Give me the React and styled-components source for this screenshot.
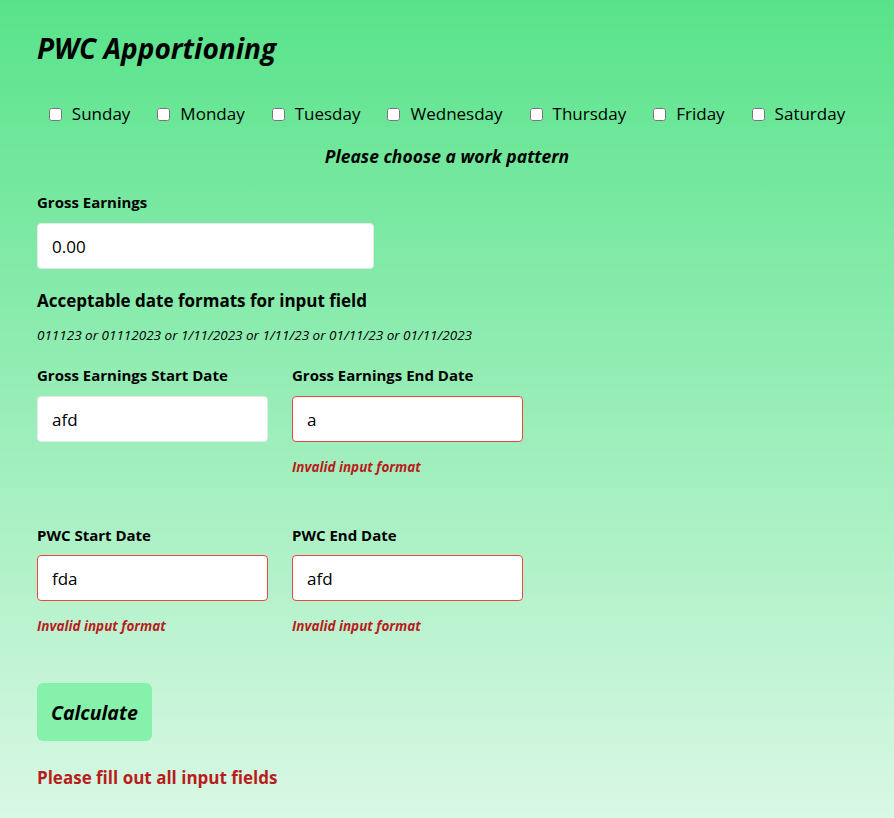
import React from "react";
import styled, { createGlobalStyle } from "styled-components";

const GlobalStyle = createGlobalStyle`
  html, body {
    margin: 0;
    padding: 0;
  }
  body {
    font-family: "Segoe UI", "Open Sans", "Noto Sans", sans-serif;
    color: #000;
  }
`;

const Page = styled.div`
  min-height: 100vh;
  box-sizing: border-box;
  padding: 28px 37px 20px;
  background: linear-gradient(to bottom, #58e38a, #d9f8e5);
`;

const Title = styled.h1`
  margin: 0;
  font-size: 28px;
  line-height: 40px;
  font-weight: 700;
  font-style: italic;
`;

const DaysRow = styled.div`
  display: flex;
  justify-content: center;
  gap: 27px;
  margin-top: 34px;
  line-height: 24px;
`;

const Day = styled.label`
  display: flex;
  align-items: center;
  gap: 10px;
  font-size: 17px;

  input {
    width: 13px;
    height: 13px;
    margin: 0;
  }
`;

const PatternNote = styled.p`
  margin: 19px 0 0;
  text-align: center;
  font-size: 17.5px;
  line-height: 22px;
  font-weight: 700;
  font-style: italic;
`;

const Field = styled.div`
  display: flex;
  flex-direction: column;
  width: ${(p) => p.width}px;
`;

const Label = styled.label`
  font-size: 15px;
  font-weight: 700;
  line-height: 20px;
  margin-bottom: ${(p) => p.gap || 11}px;
`;

const Input = styled.input`
  box-sizing: border-box;
  height: 46px;
  width: 100%;
  padding: 0 14px;
  font-family: inherit;
  font-size: 17px;
  color: #000;
  background: #fff;
  border: 1px solid ${(p) => (p.invalid ? "#ef4444" : "#e5e7eb")};
  border-radius: 4px;
  outline: none;
`;

const ErrorText = styled.div`
  margin-top: 16px;
  font-size: 13.5px;
  line-height: 18px;
  font-weight: 700;
  font-style: italic;
  color: #b91c1c;
`;

const Section = styled.div`
  margin-top: ${(p) => p.top}px;
`;

const Heading = styled.h3`
  margin: 20px 0 0;
  font-size: 17px;
  line-height: 24px;
  font-weight: 700;
`;

const Formats = styled.p`
  margin: 13px 0 0;
  font-size: 13.5px;
  line-height: 18px;
  font-style: italic;
`;

const DateRow = styled.div`
  display: flex;
  align-items: flex-start;
  gap: 24px;
  margin-top: ${(p) => p.top}px;
`;

const CalcButton = styled.button`
  display: block;
  margin-top: 48px;
  height: 58px;
  padding: 0 14px;
  border: none;
  border-radius: 6px;
  background: #86f1ab;
  font-family: inherit;
  font-size: 19.5px;
  font-weight: 700;
  font-style: italic;
  color: #000;
  cursor: pointer;
`;

const FormError = styled.p`
  margin: 25px 0 0;
  font-size: 17px;
  line-height: 24px;
  font-weight: 700;
  color: #b91c1c;
`;

const days = ["Sunday", "Monday", "Tuesday", "Wednesday", "Thursday", "Friday", "Saturday"];

function DateField({ label, value, invalid, labelGap }) {
  return (
    <Field width={231}>
      <Label gap={labelGap}>{label}</Label>
      <Input defaultValue={value} invalid={invalid} />
      {invalid && <ErrorText>Invalid input format</ErrorText>}
    </Field>
  );
}

export default function App() {
  return (
    <>
      <GlobalStyle />
      <Page>
        <Title>PWC Apportioning</Title>
        <DaysRow>
          {days.map((d) => (
            <Day key={d}>
              <input type="checkbox" />
              {d}
            </Day>
          ))}
        </DaysRow>
        <PatternNote>Please choose a work pattern</PatternNote>

        <Section top={25}>
          <Field width={337}>
            <Label>Gross Earnings</Label>
            <Input defaultValue="0.00" />
          </Field>
        </Section>

        <Heading>Acceptable date formats for input field</Heading>
        <Formats>011123 or 01112023 or 1/11/2023 or 1/11/23 or 01/11/23 or 01/11/2023</Formats>

        <DateRow top={21}>
          <DateField label="Gross Earnings Start Date" value="afd" />
          <DateField label="Gross Earnings End Date" value="a" invalid />
        </DateRow>

        <DateRow top={49}>
          <DateField label="PWC Start Date" value="fda" invalid labelGap={10} />
          <DateField label="PWC End Date" value="afd" invalid labelGap={10} />
        </DateRow>

        <CalcButton>Calculate</CalcButton>
        <FormError>Please fill out all input fields</FormError>
      </Page>
    </>
  );
}
